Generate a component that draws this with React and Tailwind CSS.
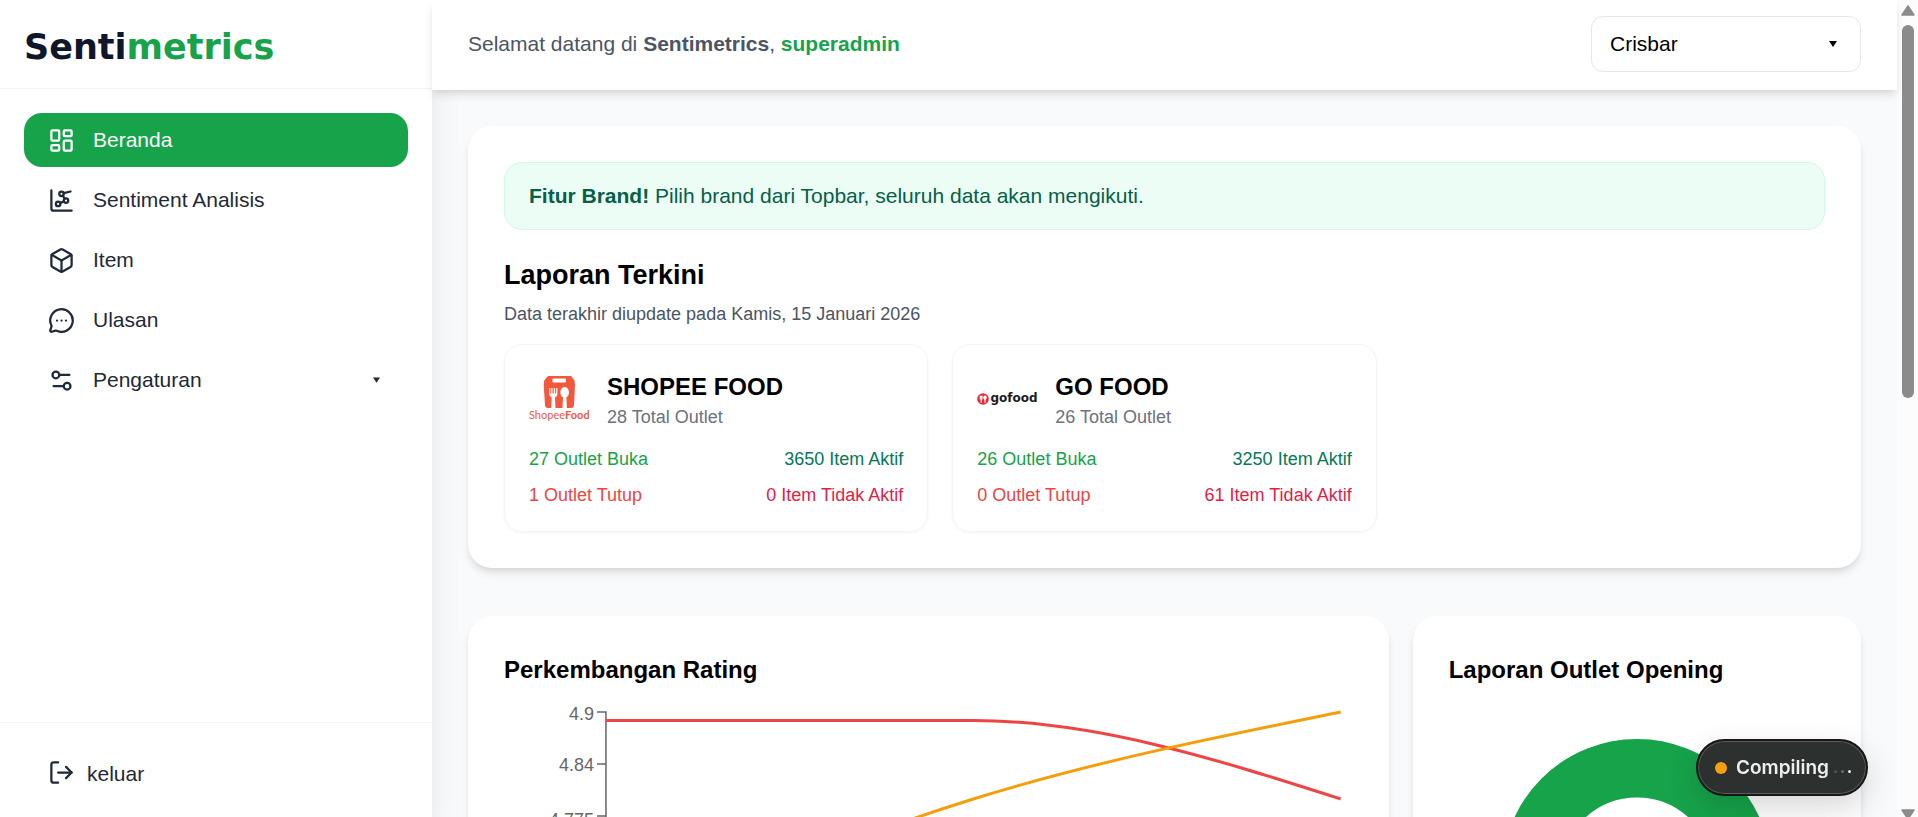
import React from "react";
import {
  LayoutDashboard,
  ChartNetwork,
  Box,
  MessageCircleMore,
  Settings2,
  LogOut,
} from "lucide-react";

const NAV = [
  { label: "Beranda", icon: LayoutDashboard, active: true },
  { label: "Sentiment Analisis", icon: ChartNetwork },
  { label: "Item", icon: Box },
  { label: "Ulasan", icon: MessageCircleMore },
];

function Caret({ className }) {
  return (
    <svg viewBox="0 0 8 6" className={className} aria-hidden="true">
      <path d="M0 0h8L4 6z" fill="currentColor" />
    </svg>
  );
}

function Sidebar() {
  return (
    <aside className="flex w-[432px] shrink-0 flex-col bg-white text-[#1f2937] shadow-[0_30px_37px_-7px_rgba(0,0,0,0.1),0_12px_15px_-9px_rgba(0,0,0,0.1)]">
      <div className="border-b border-gray-100 px-6 pt-[27px] pb-[21px]">
        <div className="font-['DejaVu_Sans',sans-serif] text-[35px] leading-10 font-black text-slate-900">
          Senti<span className="text-[#16a34a]">metrics</span>
        </div>
      </div>
      <nav className="flex flex-1 flex-col gap-1.5 p-6">
        {NAV.map(({ label, icon: Icon, active }) => (
          <a
            key={label}
            href="#"
            className={
              active
                ? "flex items-center gap-[18px] rounded-[18px] bg-[#16a34a] px-6 py-3 text-white"
                : "flex items-center gap-[18px] rounded-[18px] px-6 py-3"
            }
          >
            <Icon size={27} />
            <span>{label}</span>
          </a>
        ))}
        <button type="button" className="flex items-center gap-[18px] rounded-[18px] px-6 py-3 text-left">
          <Settings2 size={27} />
          <span className="flex-1">Pengaturan</span>
          <Caret className="mr-1 h-[6px] w-[7px]" />
        </button>
      </nav>
      <div className="border-t border-gray-100 px-6 pt-6 pb-4">
        <button type="button" className="flex w-full items-start gap-3 px-6 py-3 text-left">
          <LogOut size={27} />
          <span>keluar</span>
        </button>
      </div>
    </aside>
  );
}

function Topbar() {
  return (
    <header className="relative z-10 flex items-center justify-between bg-white px-9 pt-4 pb-[18px] shadow-[0_6px_9px_-1px_rgba(0,0,0,0.1),0_3px_6px_-3px_rgba(0,0,0,0.1)]">
      <p className="text-[#4b5563]">
        Selamat datang di <b>Sentimetrics</b>, <b className="text-[#16a34a]">superadmin</b>
      </p>
      <div className="relative">
        <select
          aria-label="Brand"
          className="h-14 w-[270px] appearance-none rounded-xl border border-gray-200 bg-white px-[18px] text-black"
        >
          <option>Crisbar</option>
        </select>
        <Caret className="pointer-events-none absolute top-[25px] right-6 h-[6px] w-2 text-black" />
      </div>
    </header>
  );
}

function ShopeeLogo() {
  return (
    <svg viewBox="0 0 60 46" className="h-[46px] w-[60px] shrink-0" role="img" aria-label="ShopeeFood">
      <path d="M19 0h23l3.5 4.5L46 9l-1 20q-.2 3-3 3H19q-2.800 0-3-3L14.700 9l.5-4.500z" fill="#f1583e" />
      <rect x="23.500" y="2.500" width="13.500" height="4" rx="1" fill="#fff" />
      <path
        d="M20.300 12v5.500q0 3.200 2.400 3.800l-.5 10.700h4.300l-.5-10.700q2.400-.6 2.400-3.800V12h-1.200v5.500h-1.100V12h-1.300v5.500h-1.300V12h-1.200v5.500h-1V12z"
        fill="#fff"
      />
      <path d="M35.700 11c2.700 0 4.300 2.800 4.300 5.600 0 2.200-1 3.900-2.600 4.700l.5 10.700h-4.400l.5-10.700c-1.600-.8-2.600-2.500-2.600-4.700 0-2.800 1.600-5.600 4.300-5.600z" fill="#fff" />
      <text x="0" y="43" fill="#f1583e" className="font-['Lato',sans-serif] text-[11px]">
        Shopee<tspan className="font-bold">Food</tspan>
      </text>
    </svg>
  );
}

function GofoodLogo() {
  return (
    <svg viewBox="0 0 60 46" className="h-[46px] w-[60px] shrink-0" role="img" aria-label="gofood">
      <circle cx="6" cy="23" r="5.800" fill="#ee2737" />
      <path d="M2.700 19.800h2.900v2.600q0 1.200-.8 1.400v3H3.600v-3q-.9-.3-.9-1.400z" fill="#fff" />
      <path d="M8 19.500c1 0 1.700.8 1.700 2 0 1-.5 1.900-1.100 2.200v3.100H7.400v-3.100c-.6-.3-1.100-1.200-1.100-2.200 0-1.200.7-2 1.700-2z" fill="#fff" />
      <text x="13.500" y="26" fill="#1c1c1c" className="font-['DejaVu_Sans',sans-serif] text-[12px] font-bold">
        gofood
      </text>
    </svg>
  );
}

function OutletCard({ logo, name, total, open, closed, active, inactive }) {
  return (
    <article className="rounded-[18px] border border-gray-100 p-6 text-[18px] leading-6 shadow-[0_1px_3px_rgba(0,0,0,0.05)]">
      <div className="mb-[18px] flex items-center gap-[18px]">
        {logo}
        <div>
          <h3 className="text-[24px] leading-9 font-bold">{name}</h3>
          <p className="text-[#6b7280]">{total} Total Outlet</p>
        </div>
      </div>
      <div className="flex justify-between">
        <span className="text-[#16a34a]">{open} Outlet Buka</span>
        <span className="text-[#047857]">{active} Item Aktif</span>
      </div>
      <div className="mt-3 flex justify-between">
        <span className="text-[#ef4444]">{closed} Outlet Tutup</span>
        <span className="text-[#e11d48]">{inactive} Item Tidak Aktif</span>
      </div>
    </article>
  );
}

function RatingChart() {
  return (
    <svg viewBox="0 0 849 300" className="mt-4 w-full" role="img" aria-label="Perkembangan Rating">
      <g fill="none" stroke="#666" strokeWidth="1.500">
        <path d="M93 8H102V290" />
        <path d="M93 60H102M93 112H102M93 164H102" />
      </g>
      <g fill="#666" textAnchor="end" className="text-[18px]">
        <text x="90" y="16">4.9</text>
        <text x="90" y="67">4.84</text>
        <text x="90" y="122">4.775</text>
      </g>
      <g fill="none" strokeWidth="3">
        <path d="M102 16.500H469.500C592 16.500 714.500 55.800 837 95" stroke="#ef4444" />
        <path d="M102 238C224.500 185 347 133 469.500 95C592 57 714.500 33 837 8" stroke="#f59e0b" />
      </g>
    </svg>
  );
}

function Donut() {
  return (
    <svg viewBox="0 0 270 270" className="mx-auto mt-[51px] block h-[270px] w-[270px]" role="img" aria-label="Laporan Outlet Opening">
      <circle cx="135" cy="135" r="105.750" fill="none" stroke="#16a34a" strokeWidth="58.500" />
    </svg>
  );
}

const CARD =
  "rounded-[24px] bg-white p-9 shadow-[0_6px_9px_-1px_rgba(0,0,0,0.1),0_3px_6px_-3px_rgba(0,0,0,0.1)]";

function ScrollTrack() {
  return (
    <div className="flex w-[21px] shrink-0 flex-col items-center justify-between bg-[#fcfcfc] pt-[5px] text-[#8b8b8b]" aria-hidden="true">
      <svg viewBox="0 0 14 11" className="h-[11px] w-[14px] shrink-0">
        <path d="M7 1 13 10H1z" fill="currentColor" stroke="currentColor" strokeLinejoin="round" strokeWidth="1.500" />
      </svg>
      <div className="flex min-h-0 w-3 flex-1 flex-col pt-[9px]">
        <div className="h-[47.600%] rounded-full bg-[#8b8b8b]" />
      </div>
      <svg viewBox="0 0 14 8" className="h-2 w-[14px] shrink-0">
        <path d="M1 1H13L7 10z" fill="currentColor" stroke="currentColor" strokeLinejoin="round" strokeWidth="1.500" />
      </svg>
    </div>
  );
}

export default function App() {
  return (
    <div className="flex h-screen overflow-hidden bg-slate-50 font-['Liberation_Sans',Arial,sans-serif] text-[21px] leading-[30px] text-black">
      <Sidebar />
      <div className="flex min-w-0 flex-1 flex-col">
        <Topbar />
        <main className="flex min-h-0 flex-1 flex-col gap-12 overflow-hidden p-9">
          <section className={CARD}>
            <div className="rounded-[18px] border border-emerald-100 bg-emerald-50 px-6 py-[18px] text-[#065f46]">
              <b>Fitur Brand!</b> Pilih brand dari Topbar, seluruh data akan mengikuti.
            </div>
            <h1 className="mt-6 text-[27px] leading-[42px] font-bold">Laporan Terkini</h1>
            <p className="mt-1.5 text-[18px] leading-6 text-[#4b5563]">
              Data terakhir diupdate pada Kamis, 15 Januari 2026
            </p>
            <div className="mt-[18px] grid grid-cols-3 gap-6">
              <OutletCard logo={<ShopeeLogo />} name="SHOPEE FOOD" total={28} open={27} closed={1} active={3650} inactive={0} />
              <OutletCard logo={<GofoodLogo />} name="GO FOOD" total={26} open={26} closed={0} active={3250} inactive={61} />
            </div>
          </section>
          <div className="grid grid-cols-3 gap-6">
            <section className={`${CARD} col-span-2`}>
              <h2 className="text-[24px] leading-9 font-bold">Perkembangan Rating</h2>
              <RatingChart />
            </section>
            <section className={CARD}>
              <h2 className="text-[24px] leading-9 font-bold">Laporan Outlet Opening</h2>
              <Donut />
            </section>
          </div>
        </main>
      </div>
      <ScrollTrack />
      <div
        role="status"
        className="fixed right-[50px] bottom-[21px] z-20 flex h-[57px] w-[172px] items-center rounded-full border-2 border-[#171717] bg-[#2c302e] pl-[17px] font-['Inter',sans-serif] text-[19px] font-semibold text-[#ededed] shadow-[inset_0_0_0_1px_#5a5d5b,0_12px_32px_rgba(0,0,0,0.16)]"
      >
        <span className="mr-[9px] size-3 rounded-full bg-[#f5a011]" />
        Compiling
        <span className="ml-[5px] flex gap-1 pt-2">
          <i className="size-[3px] rounded-full bg-[#505452]" />
          <i className="size-[3px] rounded-full bg-[#6b6e6c]" />
          <i className="size-[3px] rounded-full bg-[#ededed]" />
        </span>
      </div>
    </div>
  );
}
